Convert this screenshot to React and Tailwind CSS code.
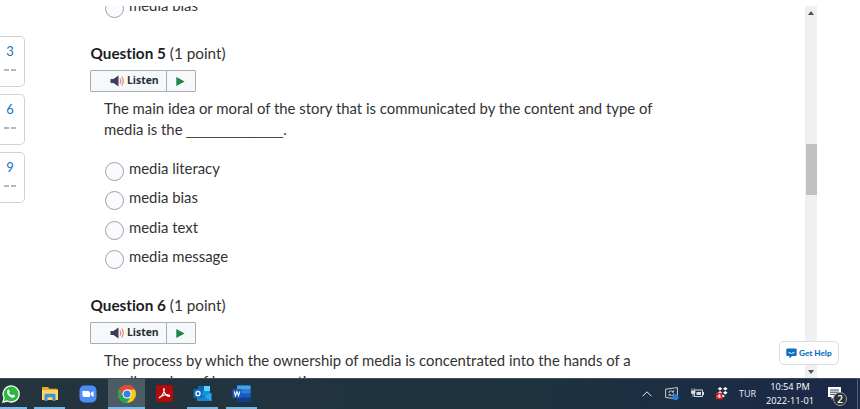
const options = ['media literacy', 'media bias', 'media text', 'media message'];

function ListenBar() {
  return (
    <div className="flex w-[106px] h-[22px] border border-[#a9aeb4] bg-[#f5f9fc] rounded-[1px]">
      <div className="flex items-center w-[76px] pl-[19px] border-r border-[#a9aeb4]">
        <svg width="15" height="12" viewBox="0 0 15 12" className="shrink-0">
          <path d="M0.5 4H3.5L8.5 0.5V11.5L3.5 8H0.5Z" fill="#3c3c5c" />
          <path d="M10 3.5Q11.6 6 10 8.5M11.7 1.5Q14.8 6 11.7 10.5" fill="none" stroke="#ee8560" strokeWidth="1.2" />
        </svg>
        <span className="ml-[2px] font-['Open_Sans',sans-serif] font-bold text-[10.4px] text-[#2a2d30]">Listen</span>
      </div>
      <div className="flex items-center pl-[9px]">
        <svg width="9" height="9" viewBox="0 0 9 9">
          <path d="M0.3 0L8.6 4.5L0.3 9Z" fill="#218547" />
        </svg>
      </div>
    </div>
  );
}

function Question({ number, children }) {
  return (
    <section>
      <h2 className="ml-[0.5px] h-[22px] leading-[22px] text-[15.3px] text-[#333]">
        <strong className="text-[#1c1d1f]">Question {number}</strong> (1 point)
      </h2>
      <div className="mt-[6px]">
        <ListenBar />
      </div>
      <p className="mt-[6px] ml-[14px] h-[44px] leading-[21.4px] whitespace-nowrap">{children}</p>
    </section>
  );
}

function Option({ label }) {
  return (
    <label className="flex h-[29.3px] items-start">
      <span className="mt-[5px] size-[19px] shrink-0 rounded-full border border-[#9da2a8] bg-[#f9fbff]" />
      <span className="ml-[5px] leading-[22px]">{label}</span>
    </label>
  );
}

function WhatsApp() {
  return (
    <svg width="18" height="18" viewBox="0 0 18 18">
      <path d="M1 17L2.1 12.8A8 8 0 1 1 5.3 16Z" fill="#2bb741" stroke="#fff" strokeWidth="1.3" />
      <path d="M5.4 5.2Q6.7 3.6 7.3 5.4L7.8 6.7Q7.6 7.3 7 7.8Q8.1 9.9 10.1 10.6L11 9.6Q11.5 9.5 13.1 10.5Q13.2 12.3 11 12.8Q9 13 6.4 10.3Q4.2 7.8 5.4 5.2Z" fill="#fff" />
    </svg>
  );
}

function Explorer() {
  return (
    <svg width="18" height="16" viewBox="0 0 18 16">
      <path d="M1 1H7L8.4 2.8H16.5V14H1Z" fill="#e9a92a" />
      <path d="M1 4H17V14H1Z" fill="#ffd768" />
      <path d="M3.5 15V9Q3.5 7.8 4.7 7.8H13.3Q14.5 7.8 14.5 9V15H11.5V11.2H6.5V15Z" fill="#3d93d3" />
    </svg>
  );
}

function Zoom() {
  return (
    <svg width="18" height="18" viewBox="0 0 18 18">
      <rect x="0.5" y="0.5" width="17" height="17" rx="4.8" fill="#4b8dfa" />
      <path d="M3.4 6H9Q11 6 11 8V12H5.4Q3.4 12 3.4 10ZM11.7 8L14.6 6V12L11.7 10Z" fill="#fff" />
    </svg>
  );
}

function Chrome() {
  return (
    <svg width="18" height="18" viewBox="0 0 18 18">
      <circle cx="9" cy="9" r="9" fill="#fbc91d" />
      <path d="M1.2 4.5A9 9 0 0 1 16.8 4.5H9A4.5 4.5 0 0 0 5 7.5L4.5 10Z" fill="#e5473a" />
      <path d="M1.2 4.5A9 9 0 0 0 9 18L12.9 11.2Q9 14 5.1 11.2Z" fill="#24a455" />
      <circle cx="9" cy="9" r="4.5" fill="#fff" />
      <circle cx="9" cy="9" r="3.5" fill="#367ee8" />
    </svg>
  );
}

function Acrobat() {
  return (
    <svg width="17" height="17" viewBox="0 0 17 17">
      <rect width="17" height="17" rx="2.5" fill="#b30b0b" />
      <path d="M3.5 12.7C5.8 12 8.7 6.8 8.2 3.8C7.6 2.9 7.2 4.8 8.2 7C9.4 9.9 12.3 12 13.5 11.2C14.5 9.5 10 9.3 5.7 10.9C3.4 11.9 2.8 13.1 3.5 12.7Z" fill="none" stroke="#fff" strokeWidth="1.1" />
    </svg>
  );
}

function Outlook() {
  return (
    <svg width="19" height="17" viewBox="0 0 19 17">
      <path d="M5 1H17V11H5Z" fill="#1490df" />
      <path d="M11 1H17V6H11Z" fill="#50d9ff" />
      <path d="M5 1H11V6H5Z" fill="#0a67b7" />
      <path d="M4 8L11 12L18.5 7.5V16H4Z" fill="#28a8ea" />
      <path d="M4 8L18.5 16H4Z" fill="#1785d8" />
      <rect x="0.5" y="4" width="9" height="9" rx="0.8" fill="#0f6cc0" />
      <ellipse cx="5" cy="8.5" rx="2" ry="2.2" fill="none" stroke="#fff" strokeWidth="1.3" />
    </svg>
  );
}

function Word() {
  return (
    <svg width="19" height="17" viewBox="0 0 19 17">
      <rect x="5" y="0.5" width="13.5" height="16" rx="1" fill="#185abd" />
      <path d="M5 0.5H18.5V4.5H5Z" fill="#41a5ee" />
      <path d="M5 4.5H18.5V8.5H5Z" fill="#2b7cd3" />
      <path d="M5 12.5H18.5V16.5H5Z" fill="#103f91" />
      <rect x="0.5" y="4" width="9" height="9" rx="0.8" fill="#1d5bbb" />
      <path d="M2.2 6.3L3.5 10.7L5 6.6L6.5 10.7L7.8 6.3" fill="none" stroke="#fff" strokeWidth="1.1" />
    </svg>
  );
}

function Taskbar() {
  return (
    <footer className="flex h-[31px] shrink-0 bg-linear-to-r from-[#25343d] via-[#1d333f] via-60% to-[#1b2847] border-t border-[#414d55] text-white font-['Open_Sans',sans-serif]">
      <div className="flex w-[27px] pl-[2px] pt-[6px] border-b-2 border-[#76b9ed]"><WhatsApp /></div>
      <div className="flex w-[31px] ml-[7px] justify-center pt-[7px] border-b-2 border-[#76b9ed]"><Explorer /></div>
      <div className="flex w-[43px] justify-center pt-[6px] pl-[3px]"><Zoom /></div>
      <div className="flex w-[37px] justify-center pt-[6px] bg-[#4c5c65] border-b-2 border-[#76b9ed]"><Chrome /></div>
      <div className="flex w-[42px] justify-center pt-[6px] pr-[3px]"><Acrobat /></div>
      <div className="flex w-[31px] justify-center pt-[6px] border-b-2 border-[#76b9ed]"><Outlook /></div>
      <div className="flex w-[31px] ml-[8px] justify-center pt-[6px] border-b-2 border-[#76b9ed]"><Word /></div>

      <div className="ml-auto flex">
        <svg width="10" height="6" viewBox="0 0 10 6" className="mt-[12px]">
          <path d="M0.5 5.3L5 0.8L9.5 5.3" fill="none" stroke="#e6e9ec" strokeWidth="1" />
        </svg>
        <svg width="14" height="14" viewBox="0 0 14 14" className="mt-[8px] ml-[13px]">
          <path d="M0.6 2.2L12.4 0.6V11.8L0.6 10.5Z" fill="none" stroke="#c7ced3" />
          <path d="M4 6.2V4.6Q6 3.2 8 4.6M8.6 3.2V5.2H6.8M8.6 6.4V8Q6.6 9.4 4.8 8M4 9.2V7.4H5.8" fill="none" stroke="#dce1e5" strokeWidth="0.8" />
          <circle cx="10.5" cy="10.3" r="3" fill="#2b7bd0" />
        </svg>
        <svg width="13" height="10" viewBox="0 0 13 10" className="mt-[9px] ml-[12px]">
          <path d="M3.5 2H11.5V8.5H3.5Z" fill="none" stroke="#d7dce2" />
          <path d="M5.5 4H10V7H5.5ZM12 4H13V7H12Z" fill="#d7dce2" />
          <path d="M1 0.5V2.5M3.2 0.5V2.5M0 3H4V5Q2 6.5 0 5ZM2 6V9" fill="#d7dce2" stroke="#d7dce2" strokeWidth="0.8" />
        </svg>
        <svg width="13" height="13" viewBox="0 0 13 13" className="mt-[8px] ml-[12px]">
          <path d="M4 0L6.3 1.7L4 3.4L1.7 1.7ZM9.3 0L11.6 1.7L9.3 3.4L7 1.7ZM4 4L6.3 5.7L4 7.4L1.7 5.7ZM9.3 4L11.6 5.7L9.3 7.4L7 5.7ZM6.7 7.5L9 9L6.7 10.5L4.5 9Z" fill="#fff" />
          <rect x="0" y="5.8" width="6.5" height="6.5" rx="1" fill="#e3222d" />
          <path d="M3.7 11V7.3L1.8 9.8H4.8" fill="none" stroke="#fff" strokeWidth="0.9" />
        </svg>
        <span className="w-[18px] mt-[9px] ml-[10px] text-[9px] leading-[12px] text-[#e5e8ee]">TUR</span>
        <div className="w-[50px] ml-[8px] pt-[1px] text-center text-[9.2px] leading-[14px] whitespace-nowrap">
          <div>10:54 PM</div>
          <div>2022-11-01</div>
        </div>
        <div className="relative w-[20px] ml-[13px] mt-[8px]">
          <svg width="14" height="14" viewBox="0 0 14 14">
            <path d="M0 0H13V10H6L3.5 12.5V10H0Z" fill="#fff" />
            <path d="M2 3H11M2 5.2H11M2 7.4H8" stroke="#34405c" strokeWidth="1" />
          </svg>
          <span className="absolute left-[5px] top-[5px] flex size-[14px] items-center justify-center rounded-full border border-[#9ca0a6] bg-[#2b2e33] text-[10px] leading-none font-semibold">2</span>
        </div>
        <div className="ml-[9px] w-[3px] border-l border-[#56617b]" />
      </div>
    </footer>
  );
}

export default function App() {
  return (
    <div className="relative flex flex-col w-[860px] h-[409px] overflow-hidden bg-white font-['Lato',sans-serif] text-[14.88px] text-[#333] [font-variant-ligatures:none]">
      <main className="flex h-[378px] pt-[6px] overflow-hidden">
        {/* Question navigation */}
        <nav className="flex flex-col gap-[7px] w-[90px] pt-[30px]">
          {[3, 6, 9].map(n => (
            <div key={n} className="w-[25px] h-[51px] shrink-0 border border-l-0 border-[#cdd3d8] rounded-r-[5px] pr-[4px] text-center">
              <div className="mt-[4px] h-[20px] leading-[20px] text-[13px] text-[#1a73bd]">{n}</div>
              <div className="mt-[8px] flex justify-center gap-[2px]">
                <i className="h-[2px] w-[5px] bg-[#b4b8bc]" />
                <i className="h-[2px] w-[5px] bg-[#b4b8bc]" />
              </div>
            </div>
          ))}
        </nav>

        <div className="w-[715px] overflow-hidden">
          <div className="ml-[15px] -mt-[12px] h-[48px]">
            <Option label="media bias" />
          </div>
          <Question number={5}>
            The main idea or moral of the story that is communicated by the content and type of
            <br />
            media is the <span className="font-['Liberation_Sans',sans-serif] text-[13.4px] leading-none">_____________</span>.
          </Question>
          <div className="mt-[15px] ml-[15px] h-[137px]">
            {options.map(o => <Option key={o} label={o} />)}
          </div>
          <Question number={6}>
            The process by which the ownership of media is concentrated into the hands of a
            <br />
            small number of large corporations.
          </Question>
        </div>

        {/* Scrollbar */}
        <div className="flex flex-col w-[12px] items-center bg-[#f0f0f0]">
          <svg width="6" height="4" viewBox="0 0 6 4" className="mt-[5px]"><path d="M3 0L6 4H0Z" fill="#505050" /></svg>
          <div className="mt-[129px] h-[51px] w-[11px] bg-[#c1c1c1]" />
          <svg width="6" height="4" viewBox="0 0 6 4" className="mt-auto mb-[4px]"><path d="M0 0H6L3 4Z" fill="#505050" /></svg>
        </div>
      </main>

      <button className="absolute left-[779px] top-[341px] flex h-[24px] w-[60px] items-center rounded-[5px] border border-[#d9dfe5] bg-white pl-[6px] font-black text-[#0b6fbf]">
        <svg width="11" height="11" viewBox="0 0 11 11" className="mr-[2px] shrink-0">
          <path d="M1.5 0.5H9.5Q10.7 0.5 10.7 1.7V6.8Q10.7 8 9.5 8H6L3.5 10.5V8H1.5Q0.3 8 0.3 6.8V1.7Q0.3 0.5 1.5 0.5Z" fill="#0b6fbf" />
          <path d="M2.5 4.3Q5.5 6.8 8.5 4.3" fill="none" stroke="#fff" />
        </svg>
        <span className="whitespace-nowrap text-[8.2px]">Get Help</span>
      </button>
      <Taskbar />
    </div>
  );
}
